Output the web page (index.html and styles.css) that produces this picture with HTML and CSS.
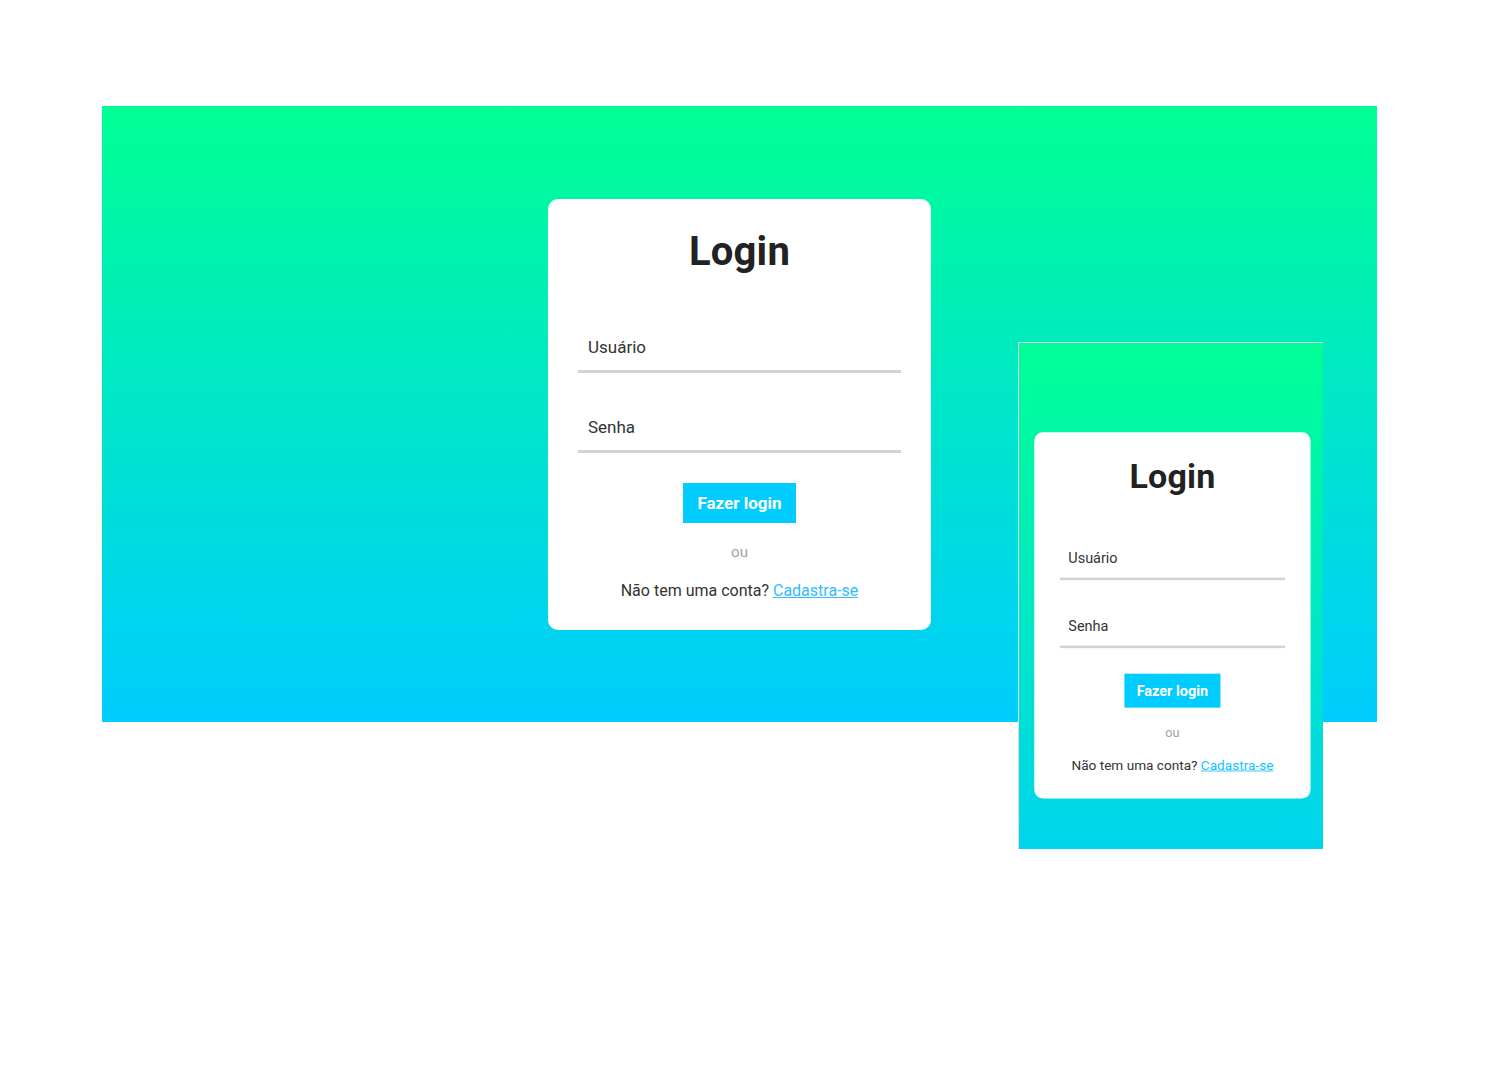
FILE: index.html
```html
<!DOCTYPE html>
<html lang="pt-BR">
<head>
<meta charset="utf-8">
<title>Login</title>
<link rel="stylesheet" href="styles.css">
</head>
<body>
<main class="stage">
  <section class="screen screen-desktop">
    <div class="card">
      <h1 class="card-title">Login</h1>
      <form class="card-form">
        <input class="field" type="text" placeholder="Usuário">
        <input class="field field-gap" type="password" placeholder="Senha">
        <button class="btn" type="button">Fazer login</button>
      </form>
      <p class="or">ou</p>
      <p class="signup">Não tem uma conta? <a href="#" class="link">Cadastra-se</a></p>
    </div>
  </section>

  <section class="phone">
    <div class="phone-view">
      <div class="card card-mobile">
        <h1 class="card-title">Login</h1>
        <form class="card-form">
          <input class="field" type="text" placeholder="Usuário">
          <input class="field field-gap" type="password" placeholder="Senha">
          <button class="btn" type="button">Fazer login</button>
        </form>
        <p class="or">ou</p>
        <p class="signup">Não tem uma conta? <a href="#" class="link">Cadastra-se</a></p>
      </div>
    </div>
  </section>
</main>
</body>
</html>
```

FILE: styles.css
```css
* { box-sizing: border-box; }

html, body {
  margin: 0;
  padding: 0;
  background: #ffffff;
  font-family: Roboto, "Noto Sans", Arial, sans-serif;
}

.stage {
  position: relative;
  width: 1500px;
  height: 1068px;
  padding: 106px 0 0 102px;
}

.screen-desktop {
  width: 1275px;
  height: 616px;
  background: linear-gradient(to bottom, #00ff95 0%, #00ccff 100%);
  display: flex;
  align-items: center;
  justify-content: center;
}

.card {
  width: 383px;
  background: #ffffff;
  border-radius: 10px;
  padding: 30px 30px 29px;
  display: flex;
  flex-direction: column;
  align-items: center;
}

.card-title {
  margin: 0;
  font-size: 40px;
  line-height: 46px;
  font-weight: 700;
  color: #222222;
  letter-spacing: 0.2px;
}

.card-form {
  width: 100%;
  margin-top: 49px;
  display: flex;
  flex-direction: column;
  align-items: center;
}

.field {
  display: block;
  width: 100%;
  height: 49px;
  padding: 0 10px;
  border: none;
  border-bottom: 3px solid #d3d3d3;
  background: transparent;
  outline: none;
  font-family: Roboto, "Noto Sans", Arial, sans-serif;
  font-size: 17px;
  color: #333333;
}

.field::placeholder {
  color: #333333;
  opacity: 1;
}

.field-gap { margin-top: 31px; }

.btn {
  margin-top: 30px;
  height: 40px;
  padding: 0 14px;
  border: none;
  border-radius: 0;
  background: #00ccff;
  color: #ffffff;
  font-family: Roboto, "Noto Sans", Arial, sans-serif;
  font-size: 17px;
  font-weight: 700;
  cursor: pointer;
}

.or {
  margin: 19px 0 0;
  font-size: 15px;
  line-height: 20px;
  color: #a3a3a3;
}

.signup {
  margin: 19px 0 0;
  font-size: 16px;
  line-height: 20px;
  color: #333333;
}

.link {
  color: #2fbcff;
  text-decoration: underline;
}

/* Mobile preview window */
.phone {
  position: absolute;
  left: 1018px;
  top: 342px;
  width: 305px;
  height: 507px;
  border-top: 1px solid #dcdcdc;
  border-left: 1px solid #dcdcdc;
  overflow: hidden;
  background: linear-gradient(to bottom, #00ff95 0%, #00d4ee 100%);
}

.phone-view {
  width: 358px;
  height: 596px;
  padding: 105px 0 0 18px;
  transform: scale(0.85);
  transform-origin: 0 0;
}

.card-mobile {
  width: 325px;
}

.card-mobile .link {
  color: #10c4ff;
}
```
